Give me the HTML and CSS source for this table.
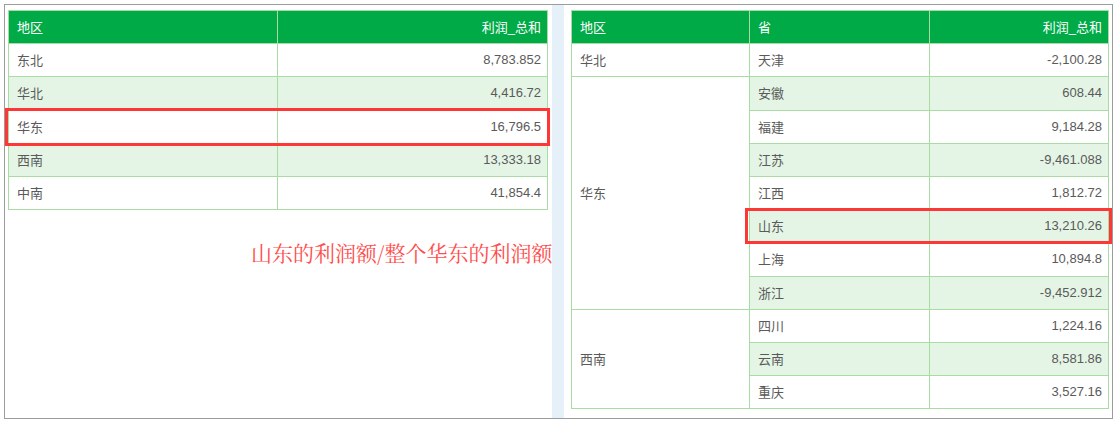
FILE: index.html
```html
<!DOCTYPE html>
<html lang="zh-CN">
<head>
<meta charset="utf-8">
<title>利润对比</title>
<link rel="stylesheet" href="styles.css">
</head>
<body>
<div class="frame">
  <section class="panel panel-left">
    <table class="grid grid-left">
      <colgroup><col class="w-269"><col class="w-270"></colgroup>
      <thead>
        <tr><th>地区</th><th class="num">利润_总和</th></tr>
      </thead>
      <tbody>
        <tr><td>东北</td><td class="num">8,783.852</td></tr>
        <tr class="alt"><td>华北</td><td class="num">4,416.72</td></tr>
        <tr><td>华东</td><td class="num">16,796.5</td></tr>
        <tr class="alt"><td>西南</td><td class="num">13,333.18</td></tr>
        <tr><td>中南</td><td class="num">41,854.4</td></tr>
      </tbody>
    </table>
  </section>
  <div class="divider"></div>
  <section class="panel panel-right">
    <table class="grid grid-right">
      <colgroup><col class="w-178"><col class="w-180"><col class="w-179"></colgroup>
      <thead>
        <tr><th>地区</th><th>省</th><th class="num">利润_总和</th></tr>
      </thead>
      <tbody>
        <tr><td class="region">华北</td><td>天津</td><td class="num">-2,100.28</td></tr>
        <tr class="alt"><td class="region" rowspan="7">华东</td><td>安徽</td><td class="num">608.44</td></tr>
        <tr><td>福建</td><td class="num">9,184.28</td></tr>
        <tr class="alt"><td>江苏</td><td class="num">-9,461.088</td></tr>
        <tr><td>江西</td><td class="num">1,812.72</td></tr>
        <tr class="alt"><td>山东</td><td class="num">13,210.26</td></tr>
        <tr><td>上海</td><td class="num">10,894.8</td></tr>
        <tr class="alt"><td>浙江</td><td class="num">-9,452.912</td></tr>
        <tr><td class="region" rowspan="3">西南</td><td>四川</td><td class="num">1,224.16</td></tr>
        <tr class="alt"><td>云南</td><td class="num">8,581.86</td></tr>
        <tr><td>重庆</td><td class="num">3,527.16</td></tr>
      </tbody>
    </table>
  </section>
  <div class="mark mark-left"></div>
  <div class="mark mark-right"></div>
  <p class="note">山东的利润额/整个华东的利润额</p>
</div>
</body>
</html>
```
FILE: styles.css
```css
html, body {
  margin: 0;
  padding: 0;
  background: #ffffff;
}

body {
  font-family: "Liberation Sans", "Noto Sans CJK SC", sans-serif;
}

.frame {
  position: relative;
  margin: 4px 0 0 4px;
  width: 1109px;
  height: 415px;
  box-sizing: border-box;
  border: 1px solid #9c9c9c;
  display: flex;
  background: #ffffff;
}

.panel {
  box-sizing: border-box;
  padding-top: 5px;
}

.panel-left {
  width: 547px;
  padding-left: 3px;
}

.divider {
  width: 12px;
  background: #e6f0f8;
}

.panel-right {
  width: 548px;
  padding-left: 7px;
}

.grid {
  border-collapse: collapse;
  table-layout: fixed;
  font-size: 13px;
  color: #5a5a5a;
}

.grid-left { width: 539px; }
.grid-right { width: 537px; }

.w-269 { width: 269px; }
.w-270 { width: 270px; }
.w-178 { width: 178px; }
.w-180 { width: 180px; }
.w-179 { width: 179px; }

.grid tr {
  height: 33.2px;
}

.grid th,
.grid td {
  border: 1px solid #a9dca2;
  padding: 0 6px 1px 8px;
  text-align: left;
  vertical-align: middle;
  white-space: nowrap;
}

.grid th {
  background: #00ab47;
  color: #ffffff;
  font-weight: normal;
}

.grid td {
  background: #ffffff;
}

.grid tr.alt td {
  background: #e4f5e6;
}

.grid tr.alt td.region,
.grid td.region {
  background: #ffffff;
}

.grid .num {
  text-align: right;
}

.mark {
  position: absolute;
  box-sizing: border-box;
  border: 3px solid #ff3636;
}

.mark-left {
  left: 0;
  top: 103px;
  width: 545px;
  height: 38px;
}

.mark-right {
  left: 740px;
  top: 203px;
  width: 367px;
  height: 36px;
}

.note {
  position: absolute;
  left: 246px;
  top: 237px;
  margin: 0;
  font-family: "Noto Serif CJK SC", "Noto Sans CJK SC", serif;
  font-size: 21px;
  line-height: 21px;
  color: #ff4d4d;
  white-space: nowrap;
}
```
